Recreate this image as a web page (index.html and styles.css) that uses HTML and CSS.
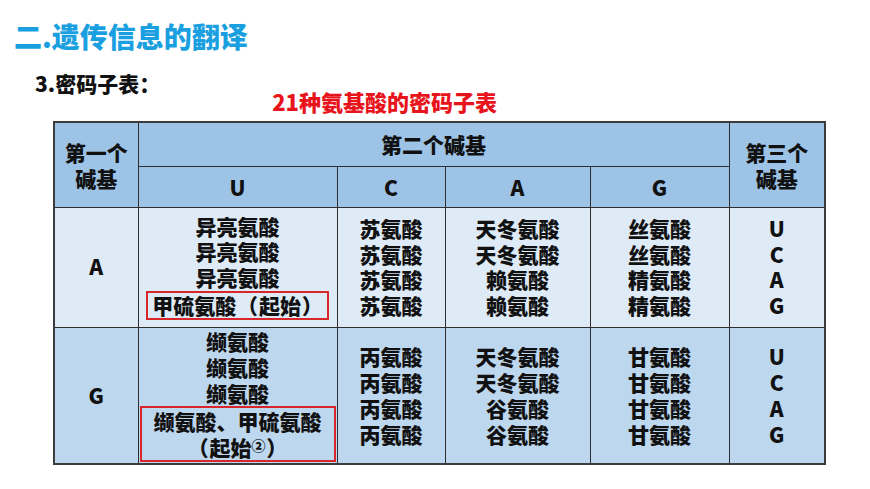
FILE: index.html
```html
<!DOCTYPE html>
<html lang="zh-CN">
<head>
<meta charset="utf-8">
<link rel="stylesheet" href="styles.css">
</head>
<body>
<h1 class="title">二.遗传信息的翻译</h1>
<div class="subrow">
  <p class="sub">3.密码子表：</p>
  <p class="caption">21种氨基酸的密码子表</p>
</div>
<div class="wrap">
<table class="codon">
  <colgroup>
    <col class="c1"><col class="c2"><col class="c3"><col class="c4"><col class="c5"><col class="c6">
  </colgroup>
  <tr class="h1">
    <th rowspan="2">第一个<br>碱基</th>
    <th colspan="4">第二个碱基</th>
    <th rowspan="2">第三个<br>碱基</th>
  </tr>
  <tr class="h2">
    <th>U</th><th>C</th><th>A</th><th>G</th>
  </tr>
  <tr class="ra">
    <td class="base">A</td>
    <td>异亮氨酸<br>异亮氨酸<br>异亮氨酸<br><span class="box">甲硫氨酸 （ 起始 ）</span></td>
    <td>苏氨酸<br>苏氨酸<br>苏氨酸<br>苏氨酸</td>
    <td>天冬氨酸<br>天冬氨酸<br>赖氨酸<br>赖氨酸</td>
    <td>丝氨酸<br>丝氨酸<br>精氨酸<br>精氨酸</td>
    <td>U<br>C<br>A<br>G</td>
  </tr>
  <tr class="rg">
    <td class="base">G</td>
    <td class="ucell">缬氨酸<br>缬氨酸<br>缬氨酸<div class="box2">缬氨酸、甲硫氨酸<br>（ 起始<span class="sup">②</span> ）</div></td>
    <td>丙氨酸<br>丙氨酸<br>丙氨酸<br>丙氨酸</td>
    <td>天冬氨酸<br>天冬氨酸<br>谷氨酸<br>谷氨酸</td>
    <td>甘氨酸<br>甘氨酸<br>甘氨酸<br>甘氨酸</td>
    <td>U<br>C<br>A<br>G</td>
  </tr>
</table>
</div>
</body>
</html>
```

FILE: styles.css
```css
html, body {
  margin: 0;
  padding: 0;
  background: #ffffff;
}
body {
  width: 870px;
  height: 489px;
  overflow: hidden;
  font-family: "Noto Sans CJK SC", "Noto Sans", sans-serif;
  font-weight: 900;
  color: #111;
}
.title {
  margin: 20px 0 0 14px;
  font-size: 28px;
  line-height: 32px;
  font-weight: 900;
  color: #1a9fe0;
}
.subrow {
  display: flex;
  align-items: flex-start;
}
.sub {
  margin: 19px 0 0 35px;
  font-size: 21px;
  line-height: 24px;
  color: #111;
}
.caption {
  margin: 37px 0 0 112px;
  font-size: 22px;
  line-height: 24px;
  color: #e8141b;
}
.wrap {
  padding: 8px 0 0 53px;
}
.codon {
  border-collapse: collapse;
  table-layout: fixed;
  width: 771px;
  border: 2px solid #3c3c3c;
  font-size: 21px;
  text-align: center;
}
.c1 { width: 84px; }
.c2 { width: 199px; }
.c3 { width: 108px; }
.c4 { width: 145px; }
.c5 { width: 139px; }
.c6 { width: 96px; }
.codon th, .codon td {
  border: 1px solid #2e2e2e;
  padding: 0;
  vertical-align: middle;
  font-weight: 900;
}
.codon th {
  background: #9dc3e6;
  line-height: 26px;
}
.h1 { height: 44px; }
.h2 { height: 41px; }
.ra { height: 120px; }
.ra td {
  background: #deebf7;
  line-height: 25.5px;
}
.rg { height: 137px; }
.rg td {
  background: #bdd7ee;
  line-height: 26px;
}
.box {
  display: inline-block;
  border: 2px solid #d9262b;
  padding: 0 4px;
  margin-top: 1px;
  line-height: 25px;
  white-space: nowrap;
  word-spacing: -4px;
}
.ucell {
  vertical-align: bottom !important;
}
.box2 {
  border: 2px solid #d9262b;
  margin: 0 1px 1px 1px;
  word-spacing: -4px;
}
.sup {
  font-size: 14px;
  vertical-align: 5px;
  line-height: 0;
}
```
